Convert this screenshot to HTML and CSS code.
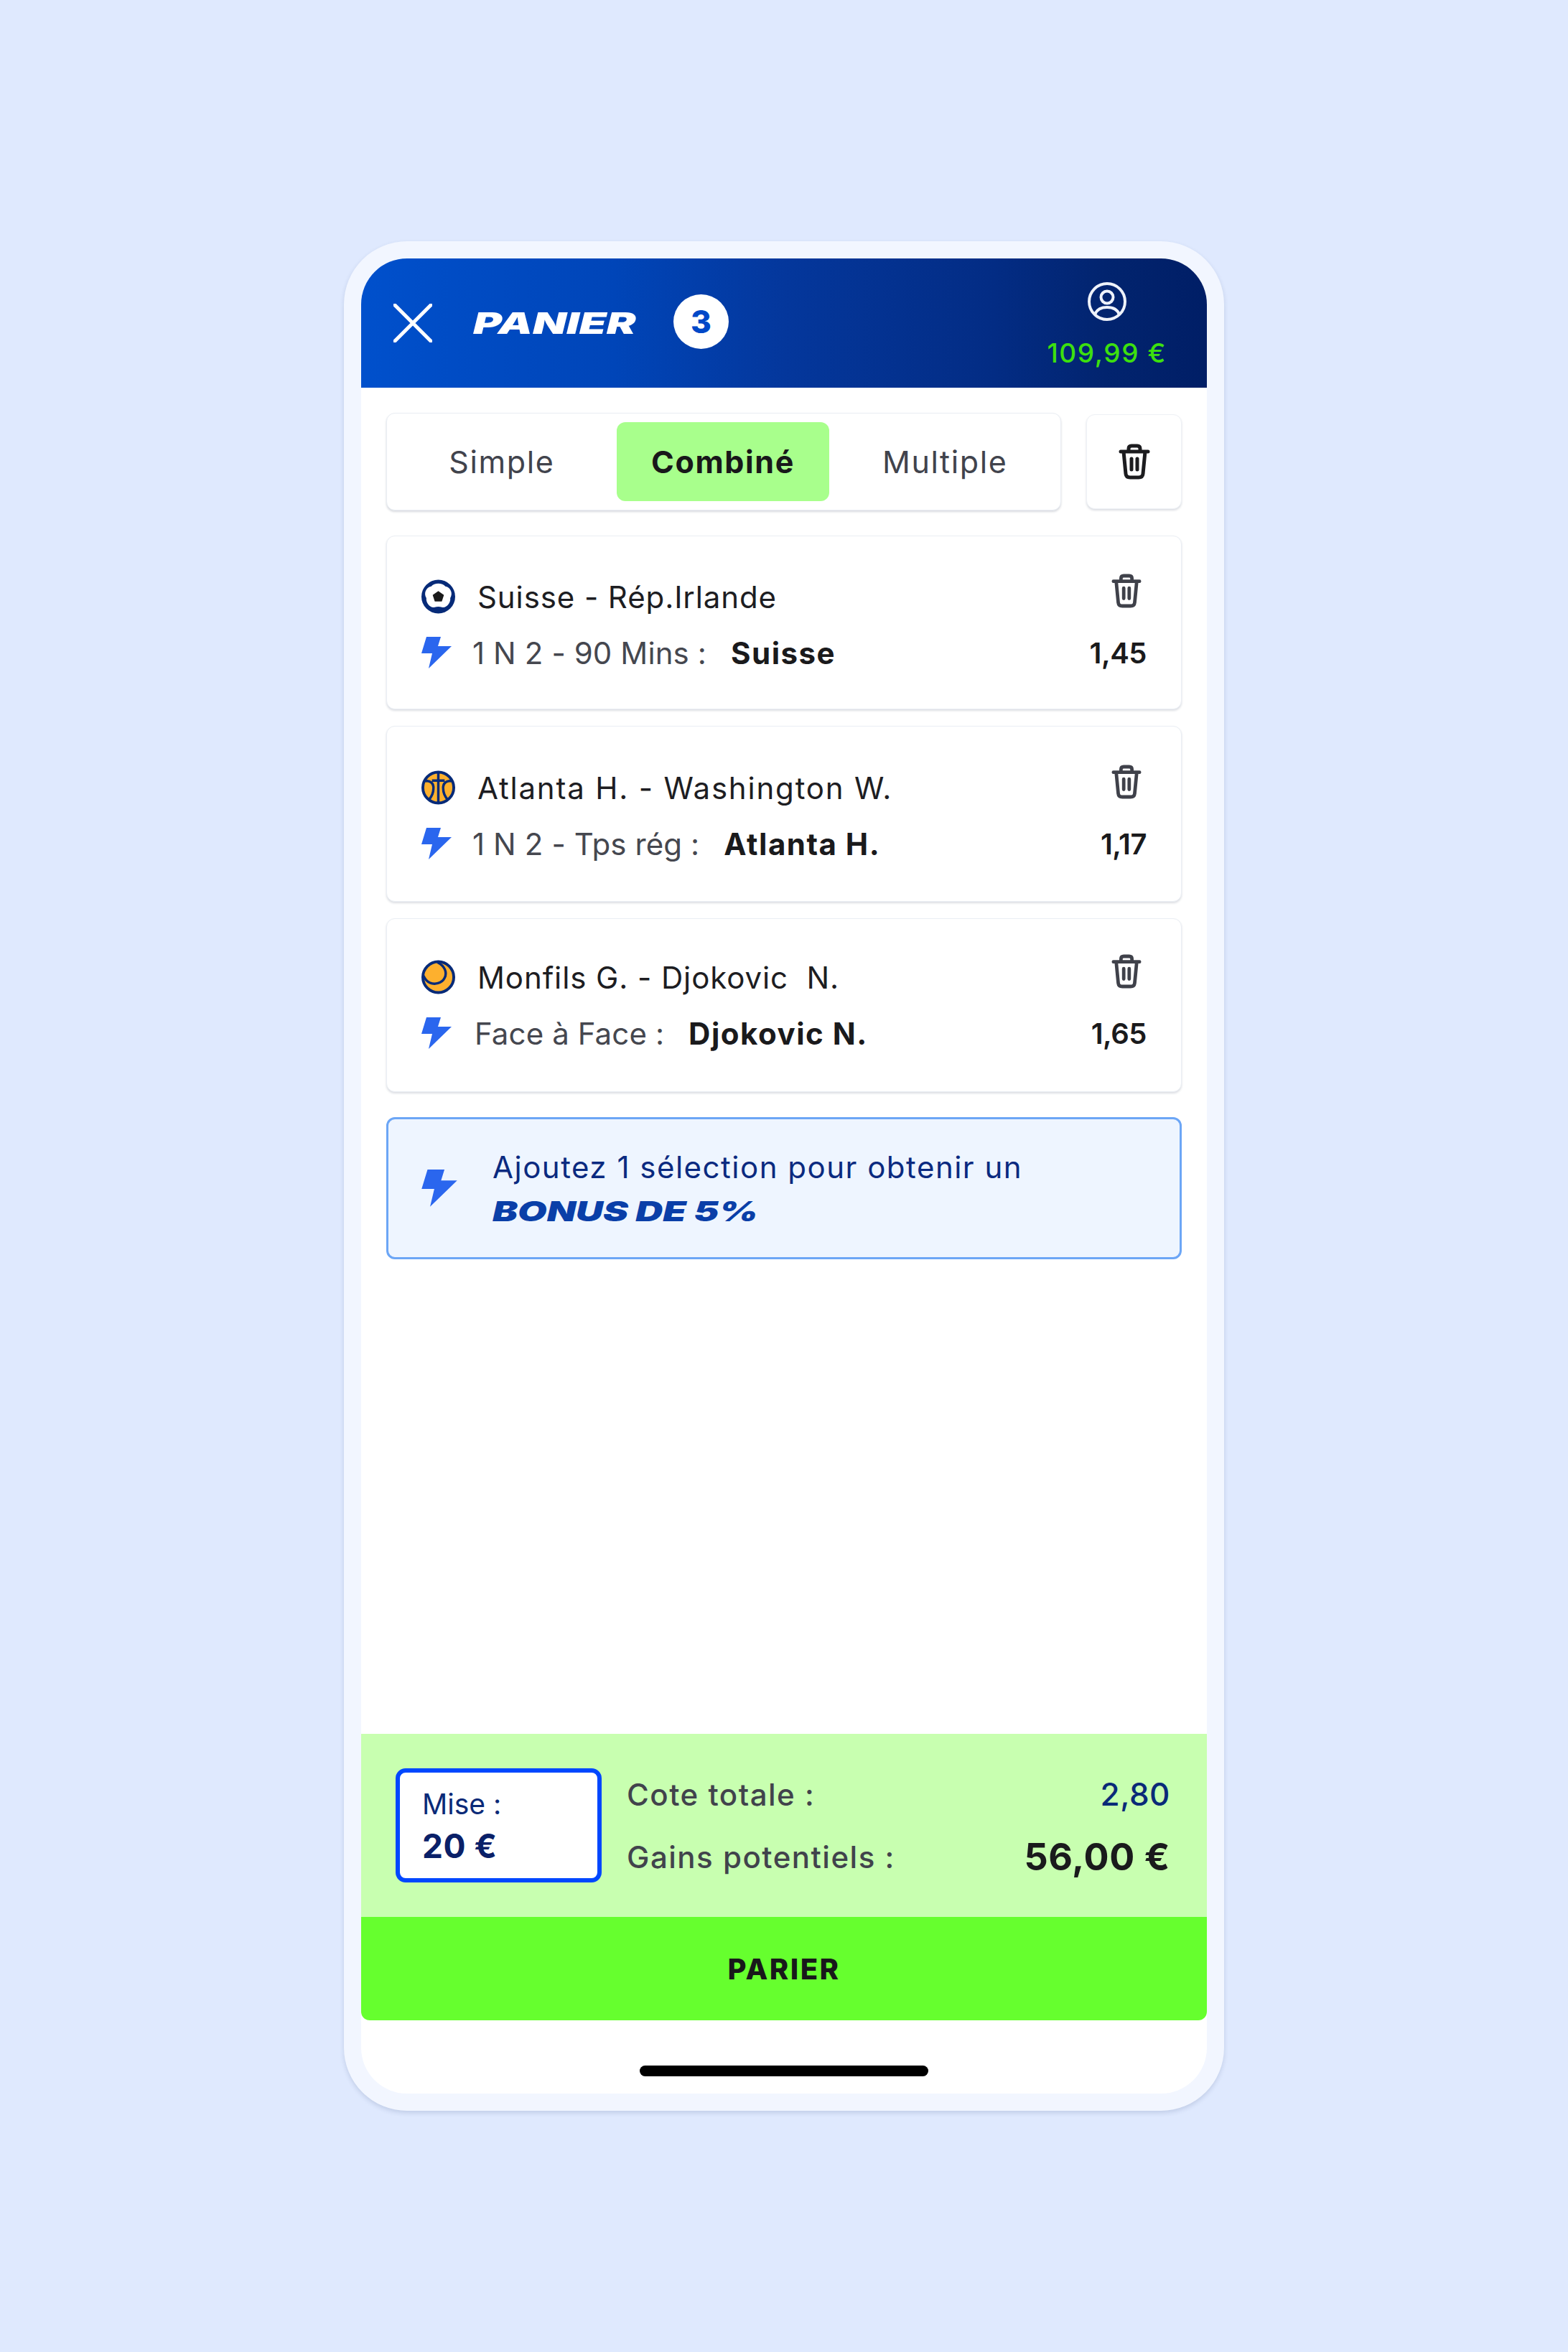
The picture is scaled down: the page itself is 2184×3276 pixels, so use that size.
FILE: index.html
```html
<!DOCTYPE html>
<html lang="fr">
<head>
  <meta charset="UTF-8" />
  <title>Panier</title>
  <link rel="stylesheet" href="styles.css">
</head>
<body>
  <svg class="sprite" xmlns="http://www.w3.org/2000/svg">
    <symbol id="bolt" viewBox="0 0 42 45"><path d="M7 0H27L23 13H42L10 44L15 23H0Z" fill="#2a66ee"/></symbol>
    <symbol id="trash" viewBox="0 0 44 50"><path d="M3 11H41M7 11L10 42Q10.500 47 16 47H28Q33.500 47 34 42L37 11M14 11V7Q14 3 18 3H26Q30 3 30 7V11M18 21V36M26 21V36" fill="none" stroke="currentColor" stroke-width="5" stroke-linecap="round" stroke-linejoin="round"/></symbol>
  </svg>

  <div class="phone">
    <div class="screen">
      <header class="top-bar">
        <svg class="close-icon" viewBox="0 0 54 54"><path d="M2 2L52 52M52 2L2 52" stroke="#fff" stroke-width="5" stroke-linecap="round"/></svg>
        <span class="top-title">PANIER</span>
        <span class="count-badge">3</span>
        <div class="wallet">
          <svg class="user-icon" viewBox="0 0 54 54" fill="none" stroke="#eef2fa" stroke-width="4">
            <circle cx="27" cy="27" r="25"/>
            <circle cx="27" cy="21" r="8.500"/>
            <path d="M10 45C13 37 19 35 27 35S41 37 44 45"/>
          </svg>
          <span class="balance">109,99 €</span>
        </div>
      </header>

      <main class="content">
        <div class="tabs-row">
          <div class="tabs">
            <span class="tab tab-simple">Simple</span>
            <span class="tab tab-active">Combiné</span>
            <span class="tab tab-multi">Multiple</span>
          </div>
          <button class="trash-btn"><svg class="trash-big"><use href="#trash"/></svg></button>
        </div>

        <section class="card card-a">
          <div class="match">
            <svg class="sport" viewBox="0 0 48 48">
              <circle cx="24" cy="24" r="24" fill="#062a78"/>
              <path d="M14 9.500C18 4 30 4 34 9.500C42 11 45 20 41 26C42 33 35 41 29 39C26 38 22 38 19 39C13 41 6 33 7 26C3 20 6 11 14 9.500Z" fill="#fff"/>
              <path d="M24 16L32 21.800L29 31H19L16 21.800Z" fill="#1a1a1a"/>
            </svg>
            <span class="teams">Suisse - Rép.Irlande</span>
            <svg class="trash-small"><use href="#trash"/></svg>
          </div>
          <div class="pick">
            <svg class="bolt"><use href="#bolt"/></svg>
            <span class="market">1 N 2 - 90 Mins :</span>
            <strong class="choice">Suisse</strong>
            <span class="odds">1,45</span>
          </div>
        </section>

        <section class="card card-b">
          <div class="match">
            <svg class="sport" viewBox="0 0 48 48" fill="none" stroke="#062a78" stroke-width="3.500">
              <circle cx="24" cy="24" r="22" fill="#fdb02e" stroke-width="4"/>
              <path d="M24 2V46M15 14H33"/>
              <path d="M5 15C12 13 18 18 17 26C17 32 14 37 11 41"/>
              <path d="M43 15C36 13 30 18 31 26C31 32 34 37 37 41"/>
            </svg>
            <span class="teams teams-wide">Atlanta H. - Washington W.</span>
            <svg class="trash-small"><use href="#trash"/></svg>
          </div>
          <div class="pick">
            <svg class="bolt"><use href="#bolt"/></svg>
            <span class="market">1 N 2 - Tps rég :</span>
            <strong class="choice">Atlanta H.</strong>
            <span class="odds">1,17</span>
          </div>
        </section>

        <section class="card card-c">
          <div class="match">
            <svg class="sport" viewBox="0 0 48 48" fill="none" stroke="#062a78" stroke-width="3.500">
              <circle cx="24" cy="24" r="22" fill="#fdb02e" stroke-width="4"/>
              <path d="M23 3C33 8 37 17 33 25C29 33 19 35 12 32C8 30 5 27 3 22"/>
            </svg>
            <span class="teams">Monfils G. - Djokovic&nbsp; N.</span>
            <svg class="trash-small"><use href="#trash"/></svg>
          </div>
          <div class="pick">
            <svg class="bolt"><use href="#bolt"/></svg>
            <span class="market market-c">Face à Face :</span>
            <strong class="choice">Djokovic N.</strong>
            <span class="odds">1,65</span>
          </div>
        </section>

        <section class="bonus">
          <svg class="bonus-bolt"><use href="#bolt"/></svg>
          <div class="bonus-text">
            <div class="bonus-line">Ajoutez 1 sélection pour obtenir un</div>
            <div class="bonus-big">BONUS DE 5%</div>
          </div>
        </section>
      </main>

      <footer class="footer">
        <div class="totals">
          <div class="stake">
            <span class="stake-label">Mise :</span>
            <span class="stake-value">20 €</span>
          </div>
          <div class="sums">
            <div class="sum-row sum-top"><span>Cote totale :</span><span class="total-odds">2,80</span></div>
            <div class="sum-row"><span>Gains potentiels :</span><span class="total-win">56,00 €</span></div>
          </div>
        </div>
        <button class="bet-btn">PARIER</button>
        <div class="home-area"><div class="home-bar"></div></div>
      </footer>
    </div>
  </div>
</body>
</html>
```
FILE: styles.css
```css
* {
  box-sizing: border-box;
}

body {
  margin: 0;
  height: 3276px;
  background: #dfe9fe;
  font-family: Inter, "Liberation Sans", sans-serif;
  display: flex;
  align-items: center;
  justify-content: center;
}

.sprite {
  display: none;
}

.phone {
  width: 1226px;
  height: 2604px;
  padding: 24px;
  background: #f2f6ff;
  border-radius: 88px;
  box-shadow: 0 3px 6px rgba(40, 60, 110, 0.16);
}

.screen {
  height: 100%;
  background: #fff;
  border-radius: 64px;
  display: flex;
  flex-direction: column;
  overflow: hidden;
}

/* top bar */
.top-bar {
  height: 180px;
  flex: none;
  display: flex;
  align-items: center;
  padding: 0 56px 0 45px;
  background: linear-gradient(90deg, #0050cc 0%, #0045b8 30%, #04379c 50%, #032c84 75%, #02246f 88%, #001e66 100%);
}

.close-icon {
  width: 54px;
  height: 54px;
}

.top-title {
  width: 230px;
  margin-left: 57px;
  color: #fff;
  font-size: 41px;
  font-weight: 900;
  font-style: italic;
  transform: scaleX(1.49);
  transform-origin: left center;
}

.count-badge {
  width: 77px;
  height: 76px;
  margin: -4px 0 0 49px;
  border-radius: 50%;
  background: #fff;
  color: #0048c8;
  font-size: 44px;
  font-weight: 800;
  display: flex;
  align-items: center;
  justify-content: center;
}

.wallet {
  margin-left: auto;
  padding-top: 6px;
  display: flex;
  flex-direction: column;
  align-items: center;
}

.user-icon {
  width: 54px;
  height: 54px;
}

.balance {
  margin-top: 22px;
  color: #3de00e;
  font-size: 37px;
  font-weight: 500;
  line-height: 45px;
  letter-spacing: 1.600px;
}

/* panier */
.content {
  flex: 1;
  padding: 35px 35px 0;
}

.tabs-row {
  display: flex;
  align-items: center;
  justify-content: space-between;
  margin-bottom: 35px;
}

.tabs {
  width: 940px;
  height: 136px;
  padding: 12px 0;
  display: flex;
  background: #fff;
  border: 1px solid #e9edf3;
  border-radius: 12px;
  box-shadow: 0 2px 3px rgba(40, 50, 80, 0.18);
}

.tab {
  display: flex;
  align-items: center;
  justify-content: center;
  font-size: 43px;
  color: #41434c;
  letter-spacing: 1.600px;
}

.tab-simple {
  width: 320px;
}

.tab-active {
  width: 297px;
  background: #a8ff8c;
  border-radius: 12px;
  color: #18181a;
  font-weight: 700;
}

.tab-multi {
  width: 322px;
}

.trash-btn {
  width: 133px;
  height: 132px;
  padding: 0;
  color: #1c1c1f;
  background: #fff;
  border: 1px solid #eef1f6;
  border-radius: 12px;
  box-shadow: 0 2px 3px rgba(40, 50, 80, 0.16);
  display: flex;
  align-items: center;
  justify-content: center;
}

.trash-big {
  width: 44px;
  height: 50px;
}

.card {
  margin-bottom: 23px;
  padding: 60px 48px 55px;
  background: #fff;
  border: 1px solid #eaeef4;
  border-radius: 12px;
  box-shadow: 0 2px 3px rgba(40, 50, 80, 0.16);
}

.card-b {
  padding: 61px 48px 57px;
}

.card-c {
  padding: 57px 48px 58px;
  margin-bottom: 35px;
}

.match {
  height: 48px;
  display: flex;
  align-items: center;
}

.sport {
  width: 47px;
  height: 48px;
  flex: none;
}

.teams {
  margin-left: 31px;
  font-size: 42px;
  color: #1d1d22;
  letter-spacing: 0.900px;
}

.teams-wide {
  letter-spacing: 1.800px;
}

.trash-small {
  width: 42px;
  height: 48px;
  margin: -16px 7px 0 auto;
  color: #3f414a;
}

.pick {
  height: 45px;
  margin-top: 32px;
  display: flex;
  align-items: center;
}

.bolt {
  width: 42px;
  height: 45px;
  flex: none;
}

.market {
  margin-left: 29px;
  font-size: 42px;
  color: #45474f;
  letter-spacing: 0.100px;
}

.market-c {
  margin-left: 32px;
}

.choice {
  margin-left: 34px;
  font-size: 42px;
  font-weight: 700;
  color: #1a1a1c;
  letter-spacing: 1.500px;
}

.odds {
  margin-left: auto;
  font-size: 40px;
  font-weight: 600;
  color: #1a1a1c;
  letter-spacing: -0.500px;
}

.bonus {
  height: 198px;
  padding-left: 46px;
  display: flex;
  align-items: center;
  background: #eef5ff;
  border: 3px solid #6ca6f6;
  border-radius: 12px;
}

.bonus-bolt {
  width: 50px;
  height: 53px;
  flex: none;
}

.bonus-text {
  margin-left: 49px;
}

.bonus-line {
  font-size: 42px;
  color: #0a2a80;
  line-height: 56px;
  letter-spacing: 1.500px;
}

.bonus-big {
  width: 367px;
  margin-top: 8px;
  font-size: 38px;
  font-weight: 900;
  font-style: italic;
  color: #0a3fa8;
  line-height: 50px;
  white-space: nowrap;
  transform: scaleX(1.38);
  transform-origin: left center;
}

/* bottom */
.footer {
  flex: none;
}

.totals {
  height: 255px;
  padding: 48px 51px 0 48px;
  display: flex;
  background: #c8ffb0;
}

.stake {
  width: 287px;
  height: 159px;
  padding-left: 31px;
  background: #fff;
  border: 6px solid #0047ff;
  border-radius: 14px;
  display: flex;
  flex-direction: column;
  justify-content: center;
  gap: 6px;
}

.stake-label {
  font-size: 39px;
  color: #0a2a78;
  line-height: 50px;
}

.stake-value {
  font-size: 46px;
  font-weight: 700;
  color: #0a2068;
  line-height: 54px;
  letter-spacing: 0.500px;
}

.sums {
  flex: 1;
  margin-left: 35px;
}

.sum-row {
  display: flex;
  align-items: center;
  justify-content: space-between;
  height: 62px;
  margin-top: 25px;
  font-size: 42px;
  font-weight: 500;
  color: #41434c;
  letter-spacing: 1.500px;
}

.sum-top {
  margin-top: 5px;
}

.total-odds {
  font-size: 44px;
  color: #0a2a78;
  letter-spacing: 0.500px;
}

.total-win {
  font-size: 52px;
  font-weight: 700;
  color: #1a1a1c;
  letter-spacing: 0.600px;
}

.bet-btn {
  display: block;
  width: 100%;
  height: 144px;
  padding: 0;
  border: none;
  border-radius: 0 0 12px 12px;
  background: #66ff2e;
  color: #18181a;
  font-family: inherit;
  font-size: 40px;
  font-weight: 800;
  letter-spacing: 2.500px;
}

.home-area {
  height: 102px;
  padding-top: 63px;
}

.home-bar {
  width: 402px;
  height: 15px;
  margin: 0 auto;
  border-radius: 8px;
  background: #000;
}
```
